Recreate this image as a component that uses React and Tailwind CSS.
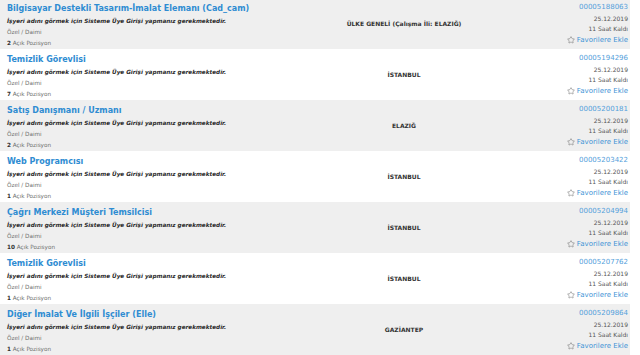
import { Star } from 'lucide-react';

const ilanlar = [
  { baslik: 'Bilgisayar Destekli Tasarım-İmalat Elemanı (Cad_cam)', adet: 2, yer: 'ÜLKE GENELİ (Çalışma İli: ELAZIĞ)', no: '00005188063' },
  { baslik: 'Temizlik Görevlisi', adet: 7, yer: 'İSTANBUL', no: '00005194296' },
  { baslik: 'Satış Danışmanı / Uzmanı', adet: 2, yer: 'ELAZIĞ', no: '00005200181' },
  { baslik: 'Web Programcısı', adet: 1, yer: 'İSTANBUL', no: '00005203422' },
  { baslik: 'Çağrı Merkezi Müşteri Temsilcisi', adet: 10, yer: 'İSTANBUL', no: '00005204994' },
  { baslik: 'Temizlik Görevlisi', adet: 1, yer: 'İSTANBUL', no: '00005207762' },
  { baslik: 'Diğer İmalat Ve İlgili İşçiler (Elle)', adet: 1, yer: 'GAZİANTEP', no: '00005209864' },
];

export default function App() {
  return (
    <div className="w-[640px] h-[355px] overflow-hidden bg-white font-['DejaVu_Sans',Verdana,sans-serif]">
      <div className="w-[630px] -mt-[2px]">
        {ilanlar.map((ilan, i) => (
          <div
            key={ilan.no}
            className={`flex h-[51px] ${i % 2 === 0 ? 'bg-[#efefef]' : 'bg-white'}`}
          >
            <div className="w-[300px] pl-[7px] pt-[4px]">
              <p className="text-[8px] leading-[13px] font-bold text-[#2e8cd2] whitespace-nowrap">{ilan.baslik}</p>
              <p className="text-[5.7px] leading-[12px] font-bold italic text-[#2a2a2a] whitespace-nowrap">
                İşyeri adını görmek için Sisteme Üye Girişi yapmanız gerekmektedir.
              </p>
              <p className="text-[5.7px] leading-[11px] text-[#707070]">Özel / Daimi</p>
              <p className="text-[5.7px] leading-[10px] text-[#707070]">
                <span className="font-bold text-[#333]">{ilan.adet}</span> Açık Pozisyon
              </p>
            </div>
            <div className="w-[208px] flex items-center justify-center">
              <p className="text-[6px] font-bold text-[#333] whitespace-nowrap">{ilan.yer}</p>
            </div>
            <div className="flex-1 pt-[3px] pr-[2px] flex flex-col items-end">
              <p className="text-[7px] leading-[12px] text-[#54a0db]">{ilan.no}</p>
              <p className="text-[6px] leading-[11px] text-[#555]">25.12.2019</p>
              <p className="text-[6px] leading-[10px] text-[#555]">11 Saat Kaldı</p>
              <p className="text-[7px] leading-[12px] text-[#3f94d6] flex items-center gap-[2px]">
                <Star size={8} strokeWidth={1.5} className="text-[#666]" />
                Favorilere Ekle
              </p>
            </div>
          </div>
        ))}
      </div>
    </div>
  );
}
